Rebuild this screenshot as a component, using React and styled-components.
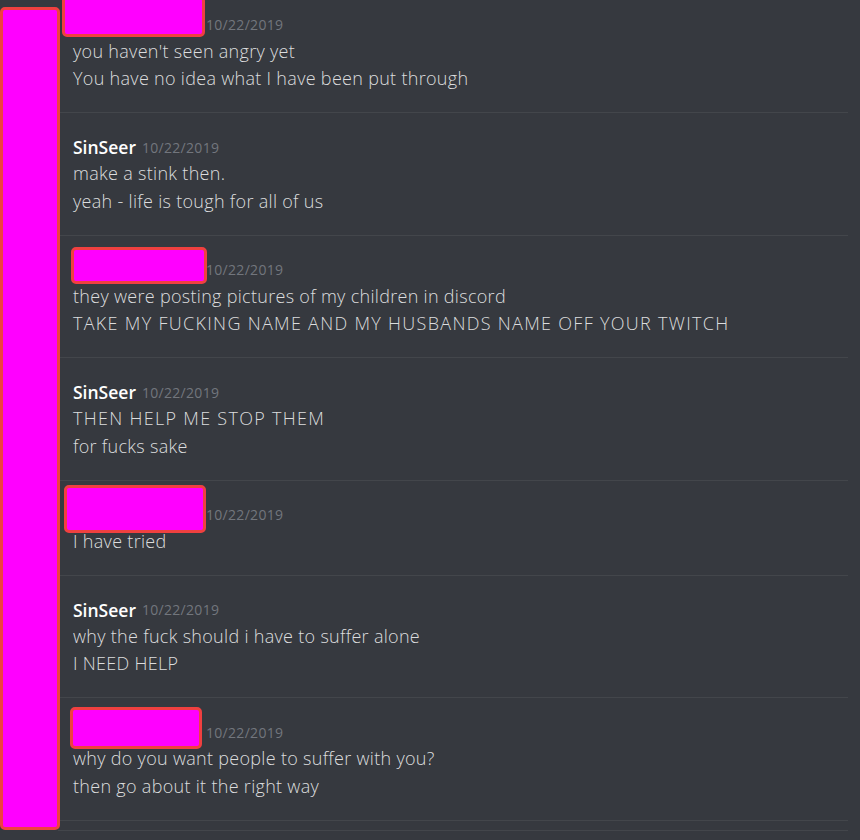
import React from "react";
import styled, { createGlobalStyle } from "styled-components";

const Global = createGlobalStyle`
  html, body { margin: 0; padding: 0; background: #36393f; }
  body { font-family: "Open Sans", "Noto Sans", sans-serif; overflow: hidden; }
`;

const Page = styled.div`
  display: flex;
  width: 860px;
  height: 840px;
  background: #36393f;
  overflow: hidden;
`;

const Rail = styled.div`
  width: 60px;
  flex: none;
  position: relative;
  z-index: 2;
  padding-top: 7px;
  box-sizing: border-box;
`;

const RailRedaction = styled.div`
  width: 60px;
  height: 823px;
  box-sizing: border-box;
  background: #ff00ff;
  border: 3px solid #f04040;
  border-radius: 5px;
`;

const Feed = styled.div`
  flex: 1;
  margin-right: 12px;
  margin-left: -2px;
  display: flex;
  flex-direction: column;
  margin-top: -9.5px;
`;

const Group = styled.div`
  padding: 22px 0 20.5px 15px;
  border-bottom: 1px solid #43464b;
`;

const Header = styled.div`
  position: relative;
  display: flex;
  align-items: center;
  height: 24px;
`;

const Name = styled.span`
  font-size: 17.5px;
  font-weight: 600;
  color: #ffffff;
  line-height: 24px;
`;

const HiddenName = styled.span`
  display: block;
  width: ${(p) => p.$w}px;
  height: 24px;
`;

const Time = styled.span`
  margin-left: 6px;
  font-size: 14px;
  letter-spacing: 0.3px;
  color: #72767d;
  line-height: 24px;
  padding-top: 1px;
`;

const NameRedaction = styled.div`
  position: absolute;
  left: ${(p) => p.$x}px;
  top: ${(p) => p.$y}px;
  width: ${(p) => p.$w}px;
  height: ${(p) => p.$h}px;
  box-sizing: border-box;
  background: #ff00ff;
  border: 3px solid #f04040;
  border-radius: 5px;
`;

const Line = styled.div`
  font-size: 18px;
  font-weight: 300;
  letter-spacing: ${(p) => (p.$wide ? "1.3px" : "0.3px")};
  color: #dcddde;
  line-height: 27.5px;
  white-space: nowrap;
  padding-top: 1px;
  margin-bottom: -1px;
`;

const Tail = styled.div`
  height: 9px;
  border-bottom: 1px solid #43464b;
`;

const groups = [
  { red: { x: -11, y: -17, w: 143, h: 41 }, lines: ["you haven't seen angry yet", "You have no idea what I have been put through"] },
  { name: "SinSeer", lines: ["make a stink then.", "yeah - life is tough for all of us"] },
  { red: { x: -2, y: -11, w: 136, h: 37 }, lines: ["they were posting pictures of my children in discord", "TAKE MY FUCKING NAME AND MY HUSBANDS NAME OFF YOUR TWITCH"], wide: [1] },
  { name: "SinSeer", lines: ["THEN HELP ME STOP THEM", "for fucks sake"], wide: [0] },
  { red: { x: -9, y: -18, w: 142, h: 48 }, lines: ["I have tried"] },
  { name: "SinSeer", lines: ["why the fuck should i have to suffer alone", "I NEED HELP"] },
  { red: { x: -3, y: -13, w: 132, h: 42 }, lines: ["why do you want people to suffer with you?", "then go about it the right way"] },
];

export default function App() {
  return (
    <Page>
      <Global />
      <Rail>
        <RailRedaction />
      </Rail>
      <Feed>
        {groups.map((g, i) => (
          <Group key={i}>
            <Header>
              {g.name ? <Name>{g.name}</Name> : <HiddenName $w={127} />}
              <Time>10/22/2019</Time>
              {g.red && <NameRedaction $x={g.red.x} $y={g.red.y} $w={g.red.w} $h={g.red.h} />}
            </Header>
            {g.lines.map((l, j) => (
              <Line key={j} $wide={g.wide && g.wide.includes(j)}>{l}</Line>
            ))}
          </Group>
        ))}
        <Tail />
      </Feed>
    </Page>
  );
}
